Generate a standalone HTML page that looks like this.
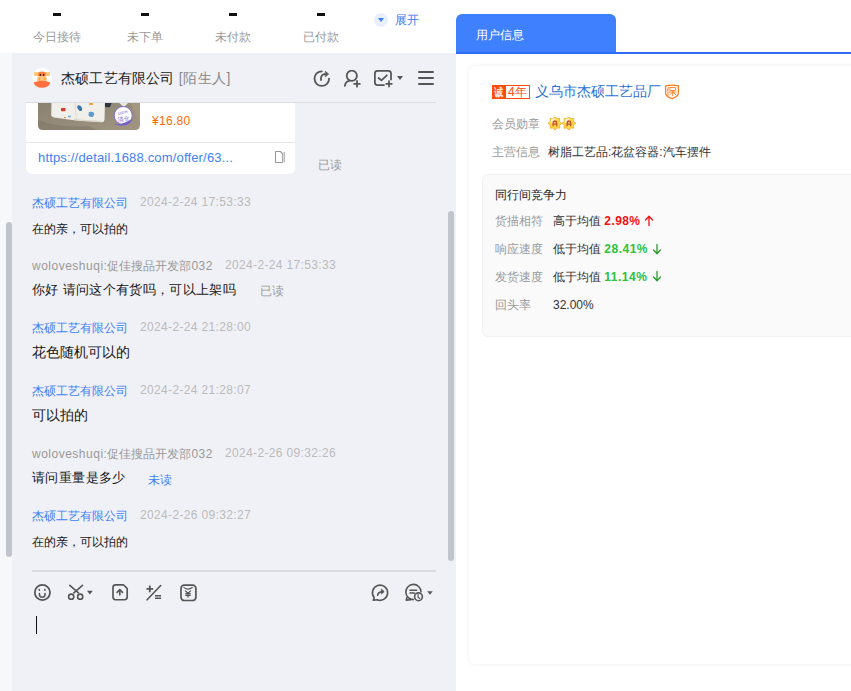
<!DOCTYPE html>
<html><head><meta charset="utf-8">
<style>
*{margin:0;padding:0;box-sizing:border-box}
html,body{width:851px;height:691px;overflow:hidden;background:#fff;font-family:"Liberation Sans",sans-serif;}
.a{position:absolute;white-space:nowrap}
#left{position:absolute;left:0;top:0;width:456px;height:691px;background:#fff}
#strip{position:absolute;left:0;top:53px;width:12px;height:638px;background:#f7f8fa}
#chat{position:absolute;left:12px;top:53px;width:444px;height:638px;background:#f0f1f6}
.dash{position:absolute;width:8px;height:3px;background:#111;top:13px}
.stat{position:absolute;top:29px;font-size:12px;line-height:16px;color:#999;width:88px;text-align:center}
.t12{font-size:12px;line-height:16px}
.name{color:#3f7ff8}
.cname{color:#999}
.time{color:#bbb;letter-spacing:0.35px}
.msg{color:#151515}
#right{position:absolute;left:456px;top:0;width:395px;height:691px;background:#fff}
</style></head><body>
<div id="left">
  <div class="dash" style="left:53px"></div>
  <div class="dash" style="left:141px"></div>
  <div class="dash" style="left:229px"></div>
  <div class="dash" style="left:317px"></div>
  <div class="stat" style="left:13px">今日接待</div>
  <div class="stat" style="left:101px">未下单</div>
  <div class="stat" style="left:189px">未付款</div>
  <div class="stat" style="left:277px">已付款</div>
  <div class="a" style="left:374px;top:13px;width:14px;height:14px;border-radius:50%;background:#e8effd"></div>
  <div class="a" style="left:378px;top:18px;width:0;height:0;border-left:3px solid transparent;border-right:3px solid transparent;border-top:4px solid #3d7efc"></div>
  <div class="a t12" style="left:395px;top:12px;color:#3a7bf6">展开</div>
</div>
<div id="strip"></div>
<div id="chat"></div>
<div class="a" style="left:26px;top:102px;width:410px;height:1px;background:#dcdde0"></div>
<!-- avatar -->
<svg class="a" style="left:32px;top:68px" width="20" height="20" viewBox="0 0 20 20">
  <circle cx="10" cy="10" r="10" fill="#fff"/>
  <path d="M2.2 4.3 Q2.5 3.2 3.3 4 L6.5 4.6 H13.5 L16.7 4 Q17.5 3.2 17.8 4.3 L18 7.2 Q17.5 8.2 16 8 H4 Q2.5 8.2 2 7.2Z" fill="#ffc472"/>
  <path d="M6.3 5.2 Q6.5 3.6 10 3.4 Q13.5 3.6 13.7 5.2 V8.4 H6.3Z" fill="#ff7d35"/>
  <rect x="5.3" y="8.2" width="9.4" height="6.5" rx="2" fill="#ffc27a"/>
  <rect x="6.8" y="9.6" width="1" height="2.6" rx="0.5" fill="#f29a1e"/>
  <rect x="12.2" y="9.6" width="1" height="2.6" rx="0.5" fill="#f29a1e"/>
  <ellipse cx="8.3" cy="6.9" rx="0.75" ry="1" fill="#1a1a1a"/>
  <ellipse cx="11.6" cy="6.9" rx="0.75" ry="1" fill="#1a1a1a"/>
  <path d="M1.6 14.5 Q10 11.2 18.4 14.5 Q17 19.6 10 19.8 Q3 19.6 1.6 14.5Z" fill="#ff6f3f"/>
</svg>
<div class="a" style="left:61px;top:68px;font-size:14px;line-height:20px;color:#1a1a1a;letter-spacing:0.2px">杰硕工艺有限公司 <span style="color:#888;letter-spacing:0.5px">[陌生人]</span></div>
<!-- product card -->
<div class="a" style="left:26px;top:103px;width:269px;height:71px;background:#fff;border-radius:0 0 6px 6px;overflow:hidden">
  <svg class="a" style="left:12px;top:-1px" width="102" height="28" viewBox="0 0 102 28">
    <defs>
      <linearGradient id="bgg" x1="0" y1="0" x2="1" y2="1">
        <stop offset="0" stop-color="#8a8171"/><stop offset="0.5" stop-color="#958b79"/><stop offset="1" stop-color="#a29681"/>
      </linearGradient>
      <clipPath id="cp"><path d="M0 0 H102 V23 Q102 28 97 28 H5 Q0 28 0 23 Z"/></clipPath>
    </defs>
    <g clip-path="url(#cp)">
      <rect width="102" height="28" fill="url(#bgg)"/>
      <path d="M0 18 Q20 26 50 24 L60 28 H0Z" fill="#7b7363" opacity="0.5"/>
      <path d="M92 0 H102 V20 Q96 10 92 0Z" fill="#a89b82" opacity="0.7"/>
      <path d="M66 0 H74 L72 5 Q68 6 66 4Z" fill="#2e3440"/>
      <path d="M13.5 0 H67 L66.5 18 Q66 20.5 63 20.3 L40 18.8 L16 15.5 Q13 15 13.2 12.5 Z" fill="#f1efe9"/>
      <path d="M37 0 L38.5 17.8" stroke="#d9d5cb" stroke-width="0.8"/>
      <path d="M36 17.7 Q50 19 63 19.3" stroke="#cfcabd" stroke-width="0.8" fill="none"/>
      <rect x="23" y="6" width="4.5" height="3.2" rx="0.6" fill="#d63a2e"/>
      <path d="M39.5 3.5 Q42 2.5 43.5 5 Q45 7 43.5 9 Q41 9.5 40.5 7.5 Q38.5 6 39.5 3.5Z" fill="#3a75ad"/>
      <path d="M51 10 Q54 9 56 11 Q56.5 14 54 15 Q51 15.5 50.5 13 Z" fill="#5b9bd2"/>
      <rect x="51" y="1" width="4" height="2" rx="0.8" fill="#e9a13a"/>
      <rect x="30" y="13.5" width="3" height="2" rx="0.8" fill="#7fb5de"/>
      <rect x="26" y="15" width="2" height="1.2" fill="#c9a050"/>
      <path d="M80 0 H91 L86 5Z" fill="#ecebe6"/>
      <circle cx="85.2" cy="13.5" r="9" fill="#fff" stroke="#7d68cf" stroke-width="0.9"/>
      <path d="M75.5 22 Q84 23.5 94.5 16.8 Q93 22.8 85.5 23.5 Q79 23.8 75.5 22Z" fill="#7560c8"/>
      <text x="85" y="12" font-size="4" text-anchor="middle" fill="#7d68cf" font-family="Liberation Sans" transform="rotate(-15 85 12)">100%</text>
      <text x="85.5" y="19" font-size="6" text-anchor="middle" fill="#7d68cf" transform="rotate(-10 85 17)">清仓</text>
    </g>
  </svg>
  <div class="a t12" style="left:126px;top:10px;color:#ff6a00;letter-spacing:0.3px">¥16.80</div>
  <div class="a" style="left:0;top:39px;width:270px;height:1px;background:#e6e6e6"></div>
  <div class="a t12" style="left:12px;top:47px;color:#3f7ff8;font-size:13px;letter-spacing:0.17px">https://detail.1688.com/offer/63...</div>
  <svg class="a" style="left:248px;top:47px" width="14" height="14" viewBox="0 0 14 14" fill="none" stroke="#8a8a8a" stroke-width="0.9" stroke-linejoin="round">
    <path d="M1.5 1.5 H6.8 L8.7 3.6 V12.5 H1.5 Z"/>
    <path d="M6.8 1.5 Q6.6 3.7 8.7 3.6" />
    <path d="M10.3 2.3 V11.8" stroke="#b5b5b5" stroke-width="1.2" stroke-linecap="round"/>
  </svg>
</div>
<div class="a t12" style="left:318px;top:157px;color:#999">已读</div>
<!-- messages -->
<div class="a t12 name" style="left:32px;top:195px">杰硕工艺有限公司</div>
<div class="a t12 time" style="left:140px;top:194px">2024-2-24 17:53:33</div>
<div class="a t12 msg" style="left:32px;top:221px">在的亲，可以拍的</div>

<div class="a t12 cname" style="left:32px;top:258px"><span style="letter-spacing:0.5px">woloveshuqi:</span>促佳搜品开发部<span style="letter-spacing:0.5px">032</span></div>
<div class="a t12 time" style="left:225px;top:257px">2024-2-24 17:53:33</div>
<div class="a msg" style="left:32px;top:281px;font-size:13px;letter-spacing:0.33px;line-height:18px">你好 请问这个有货吗，可以上架吗</div>
<div class="a t12" style="left:260px;top:283px;color:#999">已读</div>

<div class="a t12 name" style="left:32px;top:320px">杰硕工艺有限公司</div>
<div class="a t12 time" style="left:140px;top:319px">2024-2-24 21:28:00</div>
<div class="a msg" style="left:32px;top:342px;font-size:14px;line-height:20px">花色随机可以的</div>

<div class="a t12 name" style="left:32px;top:383px">杰硕工艺有限公司</div>
<div class="a t12 time" style="left:140px;top:382px">2024-2-24 21:28:07</div>
<div class="a msg" style="left:32px;top:405px;font-size:14px;line-height:20px">可以拍的</div>

<div class="a t12 cname" style="left:32px;top:446px"><span style="letter-spacing:0.5px">woloveshuqi:</span>促佳搜品开发部<span style="letter-spacing:0.5px">032</span></div>
<div class="a t12 time" style="left:225px;top:445px">2024-2-26 09:32:26</div>
<div class="a msg" style="left:32px;top:469px;font-size:13px;letter-spacing:0.4px;line-height:18px">请问重量是多少</div>
<div class="a t12" style="left:148px;top:472px;color:#3f7ff8">未读</div>

<div class="a t12 name" style="left:32px;top:508px">杰硕工艺有限公司</div>
<div class="a t12 time" style="left:140px;top:507px">2024-2-26 09:32:27</div>
<div class="a t12 msg" style="left:32px;top:534px">在的亲，可以拍的</div>

<!-- scrollbars -->
<div class="a" style="left:6px;top:222px;width:6px;height:335px;background:#c0c4cc;border-radius:3px"></div>
<div class="a" style="left:448px;top:211px;width:6px;height:350px;background:#c0c4cc;border-radius:3px"></div>
<div class="a" style="left:32px;top:570px;width:404px;height:2px;background:#dadbde"></div>
<!-- toolbar -->
<svg class="a" style="left:32px;top:582px" width="22" height="22" viewBox="0 0 22 22" fill="none" stroke="#555" stroke-width="1.6" stroke-linecap="round">
  <circle cx="10.4" cy="10.5" r="7.6" stroke-width="1.75"/>
  <path d="M7.3 7.6 V8.3 M12.9 7.6 V8.3"/>
  <path d="M7.4 11.5 Q7.4 15.2 10.3 15.2 Q13.1 15.2 13.1 11.5"/>
</svg>
<svg class="a" style="left:66px;top:582px" width="30" height="22" viewBox="0 0 30 22" fill="none" stroke="#555" stroke-width="1.6" stroke-linecap="round">
  <path d="M3.8 3.3 L12.5 10.8 M16.5 3.3 L7.8 10.8"/>
  <circle cx="5.2" cy="14.7" r="2.6"/><circle cx="14.2" cy="14.7" r="2.6"/>
  <path d="M21 8.8 L26.8 8.8 L23.9 12.6Z" fill="#555" stroke="none"/>
</svg>
<svg class="a" style="left:110px;top:582px" width="22" height="22" viewBox="0 0 22 22" fill="none" stroke="#555" stroke-width="1.65" stroke-linecap="round" stroke-linejoin="round">
  <path d="M13 2.8 H5.6 Q3 2.8 3 5.4 V15.1 Q3 17.7 5.6 17.7 H14.6 Q17.2 17.7 17.2 15.1 V7.2 Q17.2 6.6 16.8 6.2 L14 3.3 Q13.6 2.8 13 2.8Z"/>
  <path d="M9.8 8 V12.8"/>
  <path d="M7.1 10.4 L9.8 7.6 L12.5 10.4" stroke-width="1.6"/>
</svg>
<svg class="a" style="left:144px;top:582px" width="22" height="22" viewBox="0 0 22 22" fill="none" stroke="#555" stroke-width="1.8" stroke-linecap="butt">
  <path d="M5.8 3.4 V10.2 M2.4 6.8 H9.2"/>
  <path d="M16.7 3.5 L3.1 17.8" stroke-width="1.6" stroke-linecap="round"/>
  <path d="M11 13.8 H17.1 M11 16.3 H17.1" stroke-width="1.6"/>
</svg>
<svg class="a" style="left:178px;top:582px" width="22" height="22" viewBox="0 0 22 22" fill="none" stroke="#555" stroke-width="1.7" stroke-linecap="round" stroke-linejoin="round">
  <rect x="3" y="3.2" width="14.9" height="15.3" rx="3.3"/>
  <path d="M6 5.6 Q10 8.8 14.3 5.6" stroke-width="1.2"/>
  <path d="M7.4 8.9 L10 11.3 L12.6 8.9 M10 11.3 V15.2 M7.7 11.7 H12.3 M7.7 13.4 H12.3" stroke-width="1.2"/>
</svg>
<svg class="a" style="left:370px;top:582px" width="22" height="22" viewBox="0 0 22 22" fill="none" stroke="#555" stroke-width="1.6" stroke-linecap="round" stroke-linejoin="round">
  <path d="M4.2 15.6 A7.6 7.6 0 1 1 7 17.7 L3.2 18.2 Z"/>
  <path d="M7.6 13.3 Q8 10 12.5 9.6"/>
  <path d="M11.6 7.3 L14.2 9.6 L11.8 11.8Z" fill="#555" stroke-width="0.8"/>
</svg>
<svg class="a" style="left:403px;top:582px" width="34" height="22" viewBox="0 0 34 22" fill="none" stroke="#555" stroke-width="1.6" stroke-linecap="round" stroke-linejoin="round">
  <path d="M10.4 17.6 A7.6 7.6 0 1 1 18 9.8"/>
  <path d="M4 15.6 L3.2 18.1 L8 17.7"/>
  <path d="M7 8.2 H13.6 M7 11 H11.5"/>
  <circle cx="15.5" cy="14.8" r="3.9"/>
  <path d="M15.1 12.6 V15.2 L16.8 16.4" stroke-width="1.2"/>
  <path d="M24.2 9.2 L29.8 9.2 L27 12.7Z" fill="#555" stroke="none"/>
</svg>
<div class="a" style="left:36px;top:616px;width:1px;height:18px;background:#111"></div>
<!-- header icons -->
<svg class="a" style="left:312px;top:69px" width="20" height="20" viewBox="0 0 20 20" fill="none" stroke="#555" stroke-width="1.8" stroke-linecap="round">
  <path d="M9.8 2.3 A7.3 7.3 0 1 0 17.1 9.6"/>
  <path d="M9 11 V9.5 Q9 5.2 13.5 5.2"/>
  <path d="M13.6 2.6 L16.6 5.1 L13.6 7.6Z" fill="#555" stroke-width="0.8" stroke-linejoin="round"/>
</svg>
<svg class="a" style="left:343px;top:70px" width="18" height="18" viewBox="0 0 18 18" fill="none" stroke="#555" stroke-width="1.8" stroke-linecap="round">
  <circle cx="8.8" cy="5.8" r="5.1"/>
  <path d="M1.9 15.9 Q2.3 11.2 6.8 10.6"/>
  <path d="M14 11 V16.7 M11.2 13.9 H16.8"/>
</svg>
<svg class="a" style="left:374px;top:70px" width="20" height="18" viewBox="0 0 20 18" fill="none" stroke="#555" stroke-width="1.75" stroke-linecap="round" stroke-linejoin="round">
  <path d="M10 15 H3.5 Q0.9 15 0.9 12.4 V3.5 Q0.9 0.9 3.5 0.9 H14.4 Q17 0.9 17 3.5 V9.5"/>
  <path d="M4.6 8 L7.4 10.4 L12.8 5.3"/>
  <path d="M15 11 V16.6 M12.2 13.8 H17.8"/>
</svg>
<div class="a" style="left:397px;top:76px;width:0;height:0;border-left:3px solid transparent;border-right:3px solid transparent;border-top:4px solid #555"></div>
<div class="a" style="left:418px;top:71px;width:16px;height:2px;background:#555;border-radius:1px"></div>
<div class="a" style="left:418px;top:77px;width:16px;height:2px;background:#555;border-radius:1px"></div>
<div class="a" style="left:418px;top:83px;width:16px;height:2px;background:#555;border-radius:1px"></div>
<div id="right">
  <div class="a" style="left:0;top:14px;width:160px;height:40px;background:#3f80fe;border-radius:6px 6px 0 0"></div>
  <div class="a t12" style="left:20px;top:27px;color:#fff">用户信息</div>
  <div class="a" style="left:0;top:52px;width:395px;height:2px;background:#2d6dfd"></div>
  <div class="a" style="left:13px;top:66px;width:400px;height:598px;background:#fff;border-radius:6px;box-shadow:0 0 5px rgba(0,0,0,0.07)"></div>
  <!-- badge -->
  <div class="a" style="left:36px;top:85px;width:38px;height:14px;border:1px solid #ff4a0a;background:#fff"></div>
  <div class="a" style="left:36px;top:85px;width:14px;height:14px;background:#ff4a0a"></div>
  <div class="a" style="left:38px;top:85px;font-size:11px;line-height:14px;font-weight:bold;color:rgba(255,255,255,0.88);transform:scaleX(0.85);transform-origin:0 50%">诚</div>
  <div class="a" style="left:52px;top:85px;font-size:12px;line-height:15px;color:#ff4a0a">4年</div>
  <div class="a" style="left:79px;top:81px;font-size:14px;line-height:20px;color:#2e6fd8">义乌市杰硕工艺品厂</div>
  <svg class="a" style="left:208px;top:84px" width="16" height="16" viewBox="0 0 16 16" fill="none" stroke="#ff7a1a" stroke-width="1.25" stroke-linecap="round" stroke-linejoin="round">
    <path d="M1.6 1.9 Q8 0.5 14.4 1.9 V8.4 Q14.4 12.4 8 14.6 Q1.6 12.4 1.6 8.4 Z"/>
    <g stroke-width="0.85">
    <path d="M4.5 3.3 L3.2 6.4 M4 5.2 V11.3"/>
    <rect x="5.9" y="3.5" width="5.6" height="3" rx="0.3"/>
    <path d="M5.3 8 H12.2 M8.7 6.6 V11.8 M8.5 8.3 L5.8 10.8 M8.9 8.3 L11.7 10.6"/>
    </g>
  </svg>
  <div class="a t12" style="left:36px;top:116px;color:#999">会员勋章</div>
  <svg class="a" style="left:91px;top:117px" width="32" height="14" viewBox="0 0 32 14"><g transform="translate(7.9,6.3)">
      <polygon points="0.00,6.90 -1.91,4.62 -4.88,4.88 -4.62,1.91 -6.90,0.00 -4.62,-1.91 -4.88,-4.88 -1.91,-4.62 -0.00,-6.90 1.91,-4.62 4.88,-4.88 4.62,-1.91 6.90,-0.00 4.62,1.91 4.88,4.88 1.91,4.62" fill="#ffd84a" stroke="#eba21c" stroke-width="0.7" stroke-linejoin="round"/>
      <circle cx="-1.5" cy="-2.2" r="2.6" fill="#fffbe6" opacity="0.85"/>
      <g transform="scale(0.82) translate(0,0.3)">
      <path d="M-3 3.4 V0 Q-3 -3.9 0 -3.9 Q3 -3.9 3 0 V3.4 H1.3 V1.6 H-1.3 V3.4 Z" fill="#c9532a"/>
      <rect x="-1" y="-1.7" width="2" height="1.6" fill="#ffe48a"/>
      </g>
    </g><g transform="translate(21.9,6.3)">
      <polygon points="0.00,6.90 -1.91,4.62 -4.88,4.88 -4.62,1.91 -6.90,0.00 -4.62,-1.91 -4.88,-4.88 -1.91,-4.62 -0.00,-6.90 1.91,-4.62 4.88,-4.88 4.62,-1.91 6.90,-0.00 4.62,1.91 4.88,4.88 1.91,4.62" fill="#ffd84a" stroke="#eba21c" stroke-width="0.7" stroke-linejoin="round"/>
      <circle cx="-1.5" cy="-2.2" r="2.6" fill="#fffbe6" opacity="0.85"/>
      <g transform="scale(0.82) translate(0,0.3)">
      <path d="M-3 3.4 V0 Q-3 -3.9 0 -3.9 Q3 -3.9 3 0 V3.4 H1.3 V1.6 H-1.3 V3.4 Z" fill="#c9532a"/>
      <rect x="-1" y="-1.7" width="2" height="1.6" fill="#ffe48a"/>
      </g>
    </g></svg>
  <div class="a t12" style="left:36px;top:144px;color:#999">主营信息</div>
  <div class="a t12" style="left:92px;top:144px;color:#333">树脂工艺品:花盆容器:汽车摆件</div>
  <!-- competitiveness -->
  <div class="a" style="left:26px;top:174px;width:400px;height:163px;background:#fafafb;border:1px solid #f1f1f3;border-radius:6px"></div>
  <div class="a t12" style="left:39px;top:187px;color:#222">同行间竞争力</div>
  <div class="a t12" style="left:39px;top:213px;color:#999">货描相符</div>
  <div class="a t12" style="left:97px;top:213px;color:#333">高于均值 <b style="color:#f70f0f;letter-spacing:0.4px">2.98%</b></div>
  <div class="a t12" style="left:39px;top:241px;color:#999">响应速度</div>
  <div class="a t12" style="left:97px;top:241px;color:#333">低于均值 <b style="color:#2cc23a;letter-spacing:0.5px">28.41%</b></div>
  <div class="a t12" style="left:39px;top:269px;color:#999">发货速度</div>
  <div class="a t12" style="left:97px;top:269px;color:#333">低于均值 <b style="color:#2cc23a;letter-spacing:0.5px">11.14%</b></div>

  <svg class="a" style="left:188px;top:215px" width="10" height="12" viewBox="0 0 10 12" fill="none" stroke="#f70f0f" stroke-width="1.3" stroke-linecap="round" stroke-linejoin="round"><path d="M5 10.5 V1.5 M1.5 5 L5 1.3 L8.5 5"/></svg>
  <svg class="a" style="left:196px;top:243px" width="10" height="12" viewBox="0 0 10 12" fill="none" stroke="#2a9d2a" stroke-width="1.3" stroke-linecap="round" stroke-linejoin="round"><path d="M5 1.5 V10.5 M1.5 7 L5 10.7 L8.5 7"/></svg>
  <svg class="a" style="left:196px;top:270px" width="10" height="12" viewBox="0 0 10 12" fill="none" stroke="#2a9d2a" stroke-width="1.3" stroke-linecap="round" stroke-linejoin="round"><path d="M5 1.5 V10.5 M1.5 7 L5 10.7 L8.5 7"/></svg>
  <div class="a t12" style="left:39px;top:297px;color:#999">回头率</div>
  <div class="a t12" style="left:97px;top:297px;color:#333">32.00%</div>
</div>
</body></html>
